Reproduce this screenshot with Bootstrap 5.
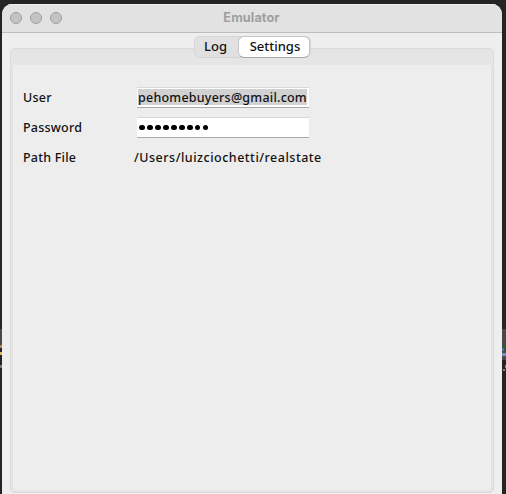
<!DOCTYPE html>
<html lang="en">
<head>
<meta charset="utf-8">
<title>Emulator</title>
<link href="https://cdn.jsdelivr.net/npm/bootstrap@5.3.0/dist/css/bootstrap.min.css" rel="stylesheet">
<style>
body{width:506px;height:494px;background:#242424;font:500 12.5px/18px "Noto Sans","Open Sans",sans-serif;color:#111}
.desktop{height:494px;padding:4px 4px 0 2px}
.win{height:490px;background:#eee;border-radius:10px 10px 0 0}
.titlebar{height:29px;background:#e2e2e2;border-bottom:1px solid #bdbdbd;border-top:1px solid #efefef;padding-left:8px}
.dot{width:12px;height:12px;margin-top:-1px;border-radius:50%;background:#c3c3c3;border:1px solid #a0a0a0}
.title{left:0;right:1px;top:4px;font:700 12.7px/18px Inter,sans-serif;letter-spacing:.1px;color:#9f9f9f}
.pane{margin:15px 8px 0;height:445px;border:1px solid #dadada;border-radius:5px;background:#e5e5e5;padding:16px 2px 2px}
.inner{height:100%;background:#ededed;padding:20px 0 0 10px}
.tabs{top:-13px;left:183px;width:117px;height:22px;border-radius:6px;background:rgba(224,224,224,.93);border:1px solid #d5d5d5;font-size:13px}
.tab-log{width:43px;padding-left:9px;line-height:19px}
.tab-set{width:73px;height:22px;margin-top:-1px;border-radius:6px;background:#fff;border:1px solid #c6c6c6;border-bottom-color:#aaa;line-height:19px;padding-left:11px}
.line{height:30px}
.cap{width:114px;letter-spacing:.22px}
.field{width:172px;height:21px;margin-top:-1px;background:#fff;border-top:1px solid #d8d8d8;border-bottom:1px solid #aaa;padding:1px}
.sel{background:#d1d1d1;width:169px;height:16px;line-height:18px;letter-spacing:.23px}
.bullets{gap:2.4px;padding-left:2px}
.bullet{width:5.6px;height:5.6px;border-radius:50%;background:#000}
.path{margin-left:-3px;letter-spacing:.5px}
.t{white-space:nowrap;display:block}
</style>
<script src="https://cdn.jsdelivr.net/npm/bootstrap@5.3.0/dist/js/bootstrap.bundle.min.js"></script>
</head>
<body class="overflow-hidden m-0">
<main class="desktop position-relative">
 <svg class="position-absolute top-0 start-0" width="506" height="494" aria-hidden="true">
  <path fill="#494949" d="M0 329h2v16H0zM502 329h4v31h-4z"/>
  <path fill="#b0895e" d="M0 345h2v3H0z"/><path fill="#e5b257" d="M0 352h2v3H0z"/><path fill="#777" d="M0 365h2v3H0z"/>
  <path fill="#176c17" d="M504 345h2v3h-2z"/><path fill="#4c6fae" d="M502 348h2v3h-2z"/><path fill="#7293ca" d="M502 353h4v3h-4z"/><path fill="#8a8a8a" d="M505 365h1v3h-1zM503 369h2v2h-2z"/>
 </svg>
 <section class="win position-relative overflow-hidden">
  <header class="titlebar d-flex align-items-center gap-2 position-relative">
   <span class="dot"></span><span class="dot"></span><span class="dot"></span>
   <div class="title position-absolute text-center">Emulator</div>
  </header>
  <div class="pane position-relative">
   <div class="tabs position-absolute d-flex" role="tablist">
    <div class="tab-log" role="tab"><span class="t">Log</span></div>
    <div class="tab-set" role="tab"><span class="t">Settings</span></div>
   </div>
   <div class="inner">
    <div class="line d-flex align-items-center pb-1"><span class="cap">User</span><div class="field"><div class="sel"><span class="t">pehomebuyers@gmail.com</span></div></div></div>
    <div class="line d-flex align-items-center pb-1"><span class="cap">Password</span><div class="field bullets d-flex align-items-center"><i class="bullet"></i><i class="bullet"></i><i class="bullet"></i><i class="bullet"></i><i class="bullet"></i><i class="bullet"></i><i class="bullet"></i><i class="bullet"></i><i class="bullet"></i></div></div>
    <div class="line d-flex align-items-center pb-1"><span class="cap">Path File</span><span class="t path">/Users/luizciochetti/realstate</span></div>
   </div>
  </div>
 </section>
</main>
</body>
</html>
